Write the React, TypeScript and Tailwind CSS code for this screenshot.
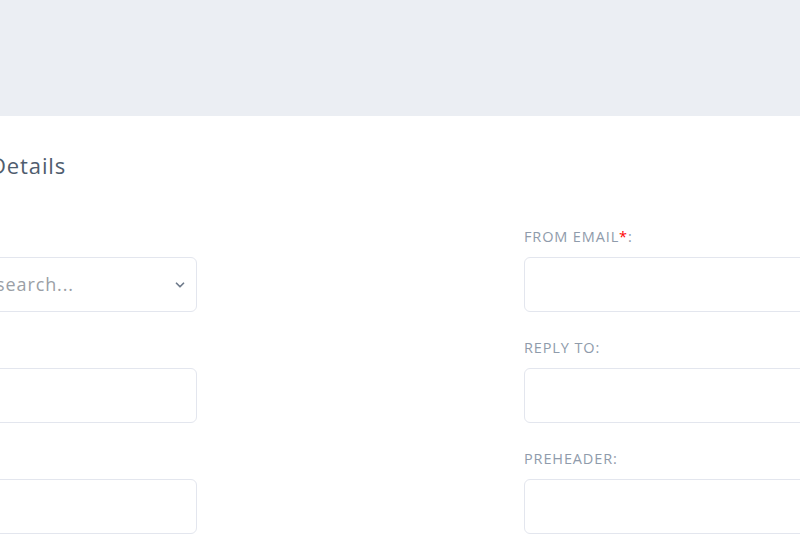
import React from "react";

function Field({ label, required, children }: { label: string; required?: boolean; children?: React.ReactNode }) {
  return (
    <div className="flex flex-col">
      <label className="h-[15px] text-[14.5px] leading-[15px] uppercase text-[#8f9bab] tracking-[0.06em]">
        {label}
        {required && <span className="text-[#ff0000]">*</span>}:
      </label>
      <div className="mt-[13px]">{children}</div>
    </div>
  );
}

function TextInput() {
  return (
    <input
      type="text"
      className="w-full h-[55px] rounded-[6px] border border-[#e3e6ee] bg-white px-4 outline-none"
    />
  );
}

export default function App() {
  return (
    <div
      className="min-h-screen bg-white overflow-hidden"
      style={{ fontFamily: '"Open Sans", "Liberation Sans", sans-serif' }}
    >
      {/* Top band */}
      <div className="h-[116px] bg-[#ebeef3]" />

      {/* Card */}
      <div className="-ml-[133px] w-[1000px] pt-[35px]">
        <h2 className="ml-[123px] text-[22px] leading-[28px] tracking-[0.04em] text-[#4f5d6e]">Details</h2>

        <div className="mt-[50px] grid grid-cols-[330px_330px] gap-x-[327px] gap-y-[28px]">
          <Field label="Template">
            <div className="relative h-[55px] rounded-[6px] border border-[#e3e6ee] bg-white flex items-center px-4">
              <span className="text-[18px] tracking-[0.05em] text-[#9b9fa6] ml-[112px]">search...</span>
              <svg
                className="absolute right-[9px] top-1/2 -translate-y-1/2"
                width="14"
                height="14"
                viewBox="0 0 24 24"
                fill="none"
                stroke="#6f7b8b"
                strokeWidth="3"
                strokeLinecap="round"
                strokeLinejoin="round"
              >
                <path d="M6 9l6 6 6-6" />
              </svg>
            </div>
          </Field>
          <Field label="From Email" required>
            <TextInput />
          </Field>
          <Field label="From Name">
            <TextInput />
          </Field>
          <Field label="Reply To">
            <TextInput />
          </Field>
          <Field label="Subject">
            <TextInput />
          </Field>
          <Field label="Preheader">
            <TextInput />
          </Field>
        </div>
      </div>
    </div>
  );
}
